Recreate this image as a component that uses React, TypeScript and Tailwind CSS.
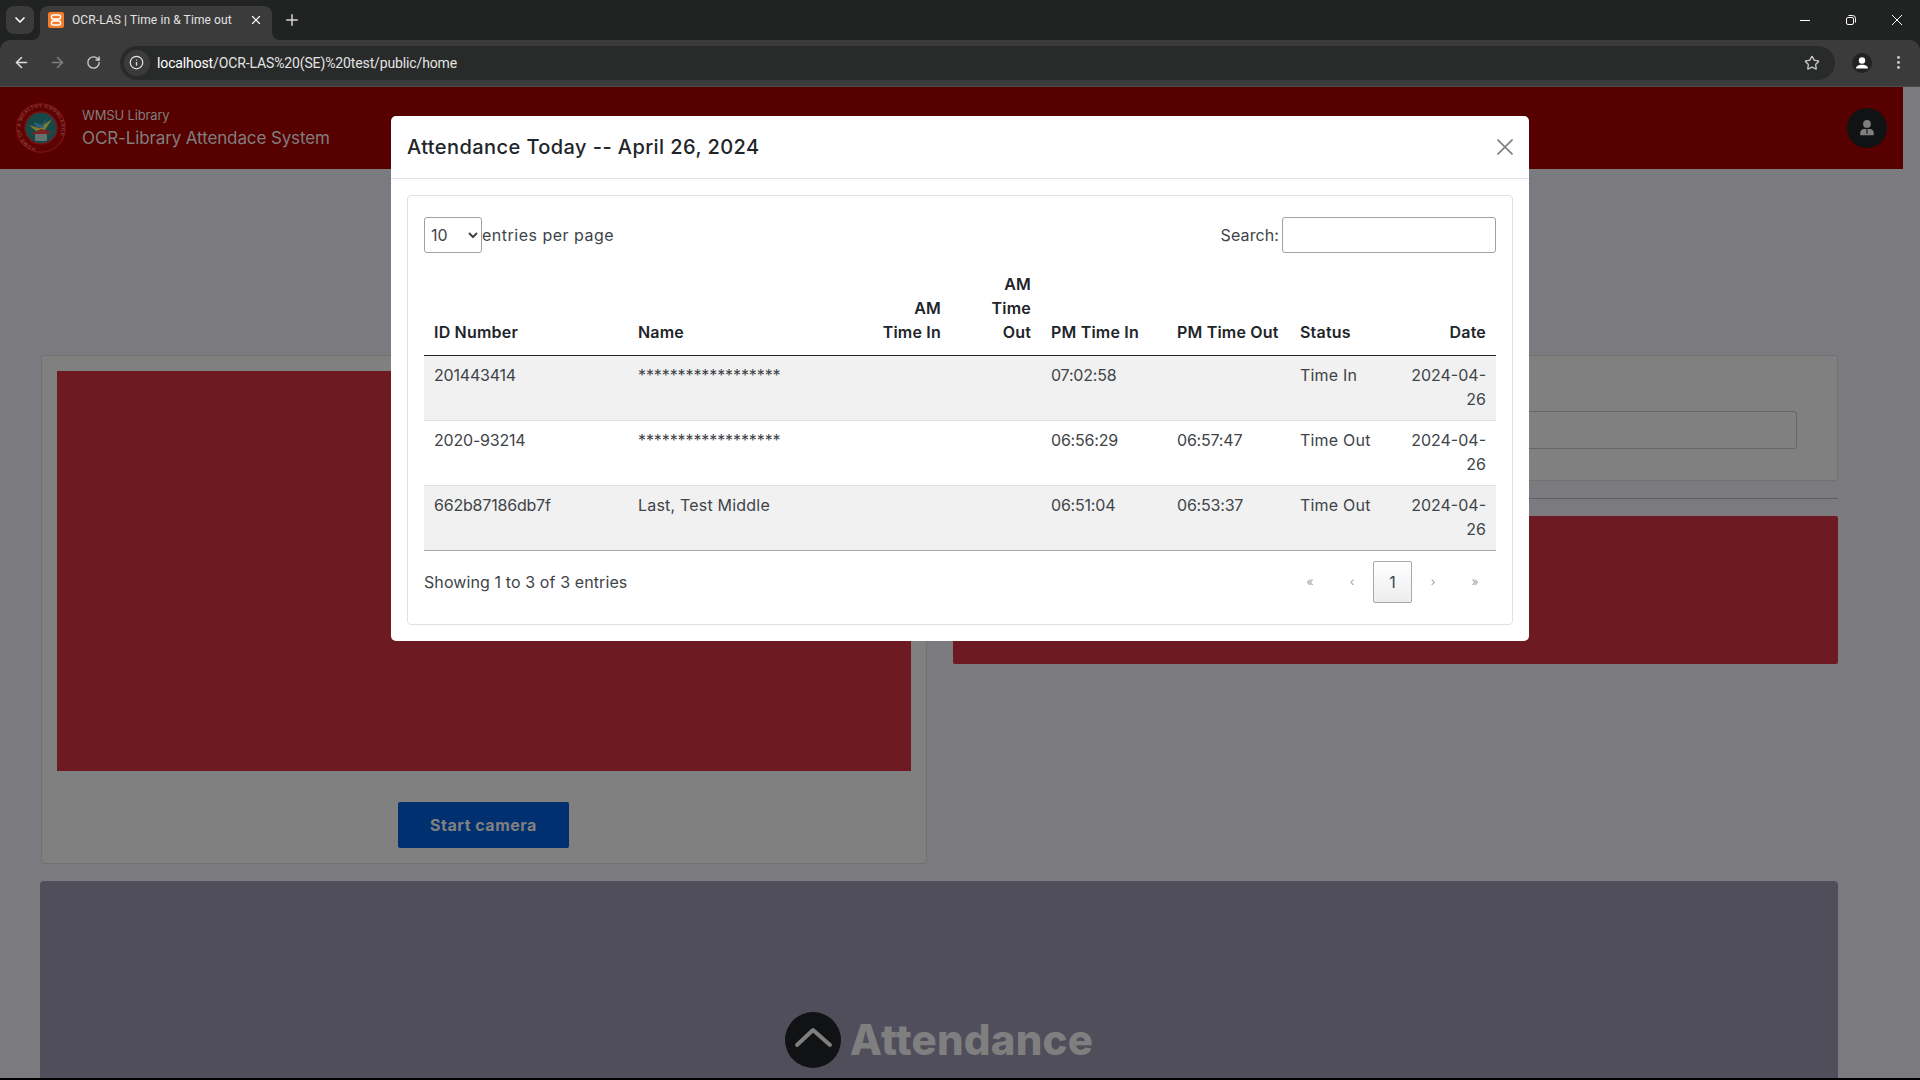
import { ArrowLeft, ArrowRight, ChevronDown, Info, MoreVertical, Plus, RotateCw, Star, X } from 'lucide-react'

const rows = [
  { id: '201443414', name: '******************', pmIn: '07:02:58', pmOut: '', status: 'Time In', shaded: true },
  { id: '2020-93214', name: '******************', pmIn: '06:56:29', pmOut: '06:57:47', status: 'Time Out', shaded: false },
  { id: '662b87186db7f', name: 'Last, Test Middle', pmIn: '06:51:04', pmOut: '06:53:37', status: 'Time Out', shaded: true },
]

function ChromeBar() {
  return (
    <div className="bg-[#202322] font-['Roboto',sans-serif]">
      {/* Tab strip */}
      <div className="flex h-[40px] items-start text-white">
        <div className="mt-[6px] ml-[6px] flex h-[28px] w-[28px] items-center justify-center rounded-lg bg-[#3b3b3b]">
          <ChevronDown className="h-4 w-4" strokeWidth={2.5} />
        </div>
        <div className="relative mt-[6px] ml-[6px] flex h-[34px] w-[232px] items-center rounded-t-lg bg-[#3b3b3b] pb-[6px] pl-[8px]">
          <div className="absolute bottom-0 -left-[8px] h-[8px] w-[8px] bg-[#3b3b3b]">
            <div className="h-full w-full rounded-br-lg bg-[#202322]" />
          </div>
          <div className="absolute -right-[8px] bottom-0 h-[8px] w-[8px] bg-[#3b3b3b]">
            <div className="h-full w-full rounded-bl-lg bg-[#202322]" />
          </div>
          <div className="flex h-[16px] w-[16px] items-center justify-center rounded-[2px] bg-[#f37b2a]">
            <svg viewBox="0 0 12 12" className="h-[12px] w-[12px]" fill="none" stroke="white" strokeWidth="1.6">
              <rect x="1.5" y="1" width="9" height="4" rx="1.6" />
              <rect x="1.5" y="7" width="9" height="4" rx="1.6" />
              <path d="M4.5 5v2M7.5 5v2" />
            </svg>
          </div>
          <span className="ml-[8px] text-[12px] tracking-[0.1px] whitespace-nowrap text-[#e3e3e3]">OCR-LAS | Time in &amp; Time out</span>
          <X className="mr-[9px] ml-auto h-[14px] w-[14px]" strokeWidth={2} />
        </div>
        <Plus className="mt-[11px] ml-[11px] h-[18px] w-[18px] text-[#d5d5d5]" strokeWidth={2} />
        <div className="ml-auto flex h-full items-center">
          <svg viewBox="0 0 46 40" className="h-[40px] w-[46px]" fill="none" stroke="white" strokeWidth="1"><path d="M18 20.5h10" /></svg>
          <svg viewBox="0 0 46 40" className="h-[40px] w-[46px]" fill="none" stroke="white" strokeWidth="1">
            <rect x="18.5" y="17.5" width="7" height="7" rx="1.5" />
            <path d="M20.5 15.5h4a3 3 0 0 1 3 3v4" />
          </svg>
          <svg viewBox="0 0 46 40" className="h-[40px] w-[46px]" fill="none" stroke="white" strokeWidth="1"><path d="M18 15l10 10M28 15l-10 10" /></svg>
        </div>
      </div>

      {/* Toolbar */}
      <div className="flex h-[47px] items-center rounded-t-[10px] border-b border-[#4a4a4a] bg-[#3b3b3b] pb-[1px]">
        <ArrowLeft className="ml-[13px] h-[17px] w-[17px] text-[#dcdcdc]" strokeWidth={2.2} />
        <ArrowRight className="ml-[19px] h-[17px] w-[17px] text-[#808080]" strokeWidth={2.2} />
        <RotateCw className="ml-[20px] h-[15px] w-[15px] text-[#c8c8c8]" strokeWidth={2.2} />
        <div className="ml-[18.5px] flex h-[34px] w-[1715px] items-center rounded-full bg-[#292a2a] pl-[4px]">
          <div className="flex h-[26px] w-[26px] items-center justify-center rounded-full bg-[#3b3b3b]">
            <Info className="h-[15px] w-[15px] text-[#e3e3e3]" strokeWidth={2} />
          </div>
          <span className="ml-[7.5px] pt-[1px] text-[14px] tracking-[-0.13px] text-[#e3e3e3]">
            <span className="text-white">localhost</span>/OCR-LAS%20(SE)%20test/public/home
          </span>
          <Star className="mr-[15px] ml-auto h-[16px] w-[16px] text-[#c8c8c8]" strokeWidth={2} />
        </div>
        <div className="ml-[17px] flex h-[20px] w-[20px] items-center justify-center rounded-full bg-[#202322]">
          <svg viewBox="0 0 20 20" className="h-[20px] w-[20px]" fill="white">
            <circle cx="10" cy="7.5" r="3.2" />
            <path d="M4 15.5c0-2.6 2.6-3.8 6-3.8s6 1.2 6 3.8z" />
          </svg>
        </div>
        <MoreVertical className="ml-[18px] h-[17px] w-[17px] text-[#c8c8c8]" strokeWidth={2.2} />
      </div>
    </div>
  )
}

function WmsuLogo() {
  return (
    <svg viewBox="0 0 50 50" className="h-[50px] w-[50px]">
      <defs>
        <path id="seal-ring" d="M25 45.5a20.5 20.5 0 1 1 .01 0" />
      </defs>
      <circle cx="25" cy="25" r="24.2" fill="#5c0304" stroke="#7e1414" strokeWidth="1.2" />
      <text fontSize="5" fontWeight="600" fill="#8d3a36" fontFamily="'Liberation Sans', sans-serif" letterSpacing="0.4">
        <textPath href="#seal-ring" startOffset="4%">HOME OF A WEALTHY KNOWLEDGE</textPath>
      </text>
      <circle cx="25" cy="25" r="16" fill="#164848" stroke="#7e1414" strokeWidth="1.4" />
      <path d="M13 22l10 3 13-9-7 11-9 1z" fill="#7f7a2c" />
      <path d="M18 19l8 3 5-7-4 10-7-1z" fill="#2e5f7a" />
      <path d="M15 31l10-5 11 3-9 4z" fill="#7a2426" />
      <rect x="19" y="31" width="12" height="7" rx="1" fill="#66706f" />
    </svg>
  )
}

function PageBehind() {
  return (
    <div className="h-[991px] overflow-hidden bg-[#7b7b7f] pr-[17px] font-['Inter',sans-serif]">
      <div className="flex h-[82px] items-center bg-[#570000] pr-[16px] pl-[16px]">
        <WmsuLogo />
        <div className="ml-[16px] text-[#7f7f7f]">
          <div className="text-[13px] leading-[20px] tracking-[-0.15px]">WMSU Library</div>
          <div className="text-[17px] leading-[26px] tracking-[-0.12px]">OCR-Library Attendace System</div>
        </div>
        <div className="ml-auto flex h-[40px] w-[40px] items-center justify-center rounded-full bg-[#101214]">
          <svg viewBox="0 0 20 20" className="h-[18px] w-[18px]" fill="#7f7f7f">
            <circle cx="10" cy="5.5" r="4.3" />
            <path d="M2.5 18v-3c0-2.400 2-4 4.500-4h6c2.500 0 4.500 1.600 4.500 4v3z" />
            <path d="M10 11v5.500" stroke="#101214" strokeWidth="1.2" />
          </svg>
        </div>
      </div>

      <div className="pt-[186px] pr-[65px] pl-[40px]">
        <div className="flex gap-[26px]">
          <div className="ml-[1px] flex h-[509px] w-[886px] flex-col rounded-[3px] border border-[#717171] bg-[#808080] p-[15px]">
            <div className="h-[400px] bg-[#6d1a23]" />
            <button className="mt-[31px] ml-[341px] h-[46px] w-[171px] rounded-[2px] bg-[#003070] text-[16px] font-bold tracking-[0.5px] text-[#808080]">
              Start camera
            </button>
          </div>
          <div className="w-[885px]">
            <div className="h-[126px] rounded-[3px] border border-[#717171] bg-[#808080] pt-[55px] pr-[40px] pl-[16px]">
              <div className="h-[38px] rounded-[3px] border border-[#666666]" />
            </div>
            <div className="mt-[17px] h-px bg-[#5f5f63]" />
            <div className="mt-[17px] h-[148px] rounded-[2px] bg-[#6d1a23]" />
          </div>
        </div>
        <div className="mt-[17px] flex h-[197px] items-start justify-center rounded-t-[4px] bg-[#4f4e5a] pt-[131px]">
          <div className="flex items-center">
            <div className="h-[56px] w-[56px] rounded-full bg-[#101214]">
              <svg viewBox="0 0 56 56" className="h-[56px] w-[56px]" fill="none" stroke="#7f7f7f" strokeWidth="4" strokeLinecap="round" strokeLinejoin="round">
                <path d="M12 33L28 18l17 15" />
              </svg>
            </div>
            <span className="ml-[9px] text-[42px] leading-[56px] font-extrabold tracking-[0.2px] text-[#7f7f7f]">Attendance</span>
          </div>
        </div>
      </div>
    </div>
  )
}

function AttendanceModal() {
  const th = 'px-[10px] pb-[11px] align-bottom text-[16px] leading-[24px] font-semibold tracking-[0.2px] text-[#212529]'
  const td = 'px-[10px] pt-[7px] pb-[9px] align-top text-[16px] leading-[24px] text-[#404448]'
  const digits = 'tracking-[-0.2px]'

  return (
    <div className="absolute top-[116px] left-[391px] w-[1138px] rounded-[5px] bg-white font-['Inter',sans-serif] text-[#212529]">
      <div className="flex h-[63px] items-center justify-between border-b border-[#dee2e6] px-[16px]">
        <h2 className="text-[20px] font-medium tracking-[0.42px]">Attendance Today -- April 26, 2024</h2>
        <svg viewBox="0 0 16 16" className="h-[16px] w-[16px]" fill="none" stroke="#7f7f7f" strokeWidth="1.6">
          <path d="M0.5 0.500l15 15M15.500 0.500l-15 15" />
        </svg>
      </div>
      <div className="p-[16px]">
        <div className="h-[430px] rounded-[4px] border border-[#dee2e6] px-[16px] pt-[21px]">
          <div className="flex items-center">
            <select className="h-[36px] w-[58px] rounded-[3px] border border-[#a0a0a0] pl-[2px] text-[16px] text-[#404448]" defaultValue="10">
              <option>10</option>
            </select>
            <span className="text-[16px] tracking-[0.5px] text-[#404448]">entries per page</span>
            <span className="mr-[3px] ml-auto pb-[1px] text-[16px] tracking-[0.1px] text-[#404448]">Search:</span>
            <input className="h-[36px] w-[214px] rounded-[3px] border border-[#a0a0a0]" />
          </div>

          <table className="mt-[19px] w-[1072px] table-fixed border-collapse">
            <colgroup>
              <col className="w-[204px]" />
              <col className="w-[243px]" />
              <col className="w-[80px]" />
              <col className="w-[90px]" />
              <col className="w-[126px]" />
              <col className="w-[123px]" />
              <col className="w-[106px]" />
              <col className="w-[100px]" />
            </colgroup>
            <thead>
              <tr className="border-b border-[#212529]">
                <th className={`${th} text-left`}>ID Number</th>
                <th className={`${th} text-left`}>Name</th>
                <th className={`${th} text-right`}>AM<br />Time In</th>
                <th className={`${th} text-right`}>AM<br />Time<br />Out</th>
                <th className={`${th} text-left whitespace-nowrap`}>PM Time In</th>
                <th className={`${th} text-left whitespace-nowrap`}>PM Time Out</th>
                <th className={`${th} text-left`}>Status</th>
                <th className={`${th} text-right`}>Date</th>
              </tr>
            </thead>
            <tbody>
              {rows.map((row, i) => (
                <tr
                  key={row.id}
                  className={`h-[65px] ${row.shaded ? 'bg-[#f1f1f1]' : 'bg-white'} ${i === rows.length - 1 ? 'border-b border-[#a9a9a9]' : 'border-b border-[#dee2e6]'}`}
                >
                  <td className={`${td} ${digits}`}>{row.id}</td>
                  <td className={`${td} ${row.name.startsWith('*') ? 'tracking-[-0.1px]' : 'tracking-[0.2px]'}`}>{row.name}</td>
                  <td className={td} />
                  <td className={td} />
                  <td className={`${td} ${digits}`}>{row.pmIn}</td>
                  <td className={`${td} ${digits}`}>{row.pmOut}</td>
                  <td className={`${td} tracking-[0.2px]`}>{row.status}</td>
                  <td className={`${td} text-right`}>2024-04-26</td>
                </tr>
              ))}
            </tbody>
          </table>

          <div className="mt-[10px] flex items-center">
            <span className="pb-[1px] text-[16px] tracking-[0.1px] text-[#404448]">Showing 1 to 3 of 3 entries</span>
            <div className="ml-auto flex items-center text-[12px] text-[#a0a0a0]">
              <span className="w-[42px] text-center">«</span>
              <span className="w-[42px] text-center">‹</span>
              <span className="flex h-[42px] w-[39px] items-center justify-center rounded-[2px] border border-[#a9a9a9] bg-gradient-to-b from-white to-[#ededed] text-[16px] text-[#404448]">1</span>
              <span className="w-[42px] text-center">›</span>
              <span className="w-[42px] text-center">»</span>
            </div>
          </div>
        </div>
      </div>
    </div>
  )
}

export default function App() {
  return (
    <div className="relative h-[1080px] w-[1920px] overflow-hidden bg-black">
      <ChromeBar />
      <PageBehind />
      <AttendanceModal />
    </div>
  )
}
